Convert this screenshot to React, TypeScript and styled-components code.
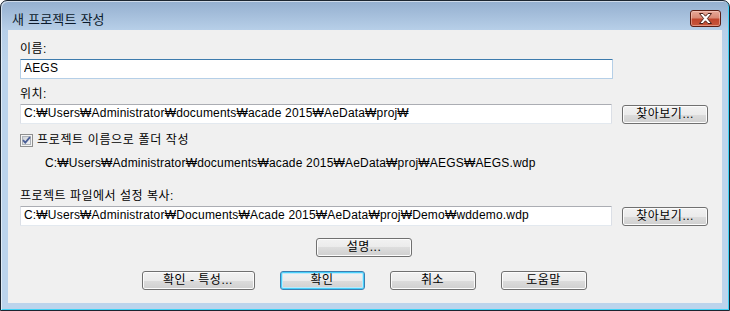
import React from 'react';
import styled, { createGlobalStyle, css } from 'styled-components';

const GlobalStyle = createGlobalStyle`
  html, body {
    margin: 0;
    padding: 0;
    background: #ffffff;
  }
  * {
    box-sizing: border-box;
  }
`;

const uiFont = `"Liberation Sans", "Noto Sans CJK KR", sans-serif`;

// Win7 basic theme frame
const Window = styled.div`
  width: 730px;
  height: 311px;
  border: 1px solid #1c2530;
  border-radius: 7px 7px 0 0;
  background: linear-gradient(to bottom, #94afcf 0, #b7cfe8 29px, #bcd4ec 60px, #bcd4ec 100%);
  box-shadow: inset 1px 1px 0 rgba(255, 255, 255, 0.55), inset -1px -1px 0 #3fd2f5;
  display: flex;
  flex-direction: column;
  font-family: ${uiFont};
  font-size: 12px;
  color: #000;
`;

const TitleBar = styled.div`
  height: 29px;
  display: flex;
  justify-content: space-between;
  align-items: flex-start;
  padding: 0 8px 0 11px;
`;

const Title = styled.div`
  font-size: 13px;
  line-height: 18px;
  margin-top: 10px;
  letter-spacing: 0.2px;
  color: #0b1a2c;
`;

const CloseButton = styled.div`
  width: 31px;
  height: 17px;
  margin-top: 9px;
  border: 1px solid #5b1e14;
  border-radius: 3px;
  background: linear-gradient(to bottom, #e7a899 0, #d98a76 45%, #c0452d 55%, #c8573c 100%);
  box-shadow: inset 0 0 0 1px rgba(255, 220, 210, 0.45);
  display: flex;
  align-items: center;
  justify-content: center;
`;

const Client = styled.div`
  flex: 1;
  margin: 0 7px 7px 7px;
  background: #f0f0f0;
  padding: 12px 14px 0 12px;
  display: flex;
  flex-direction: column;
`;

const Label = styled.div<{ $gap?: number }>`
  line-height: 14px;
  height: 14px;
  margin-top: ${(p) => p.$gap ?? 0}px;
  letter-spacing: 0.5px;
  white-space: nowrap;
`;

const Row = styled.div<{ $gap?: number }>`
  display: flex;
  align-items: center;
  gap: 10px;
  margin-top: ${(p) => p.$gap ?? 0}px;
`;

const TextBox = styled.input<{ $focused?: boolean }>`
  width: 593px;
  height: 20px;
  padding: 0 3px 3px 3px;
  margin: 0;
  font-family: ${uiFont};
  font-size: 12px;
  letter-spacing: 0.18px;
  color: #000;
  background: #fff;
  outline: none;
  border: 1px solid #dbdfe6;
  border-top-color: #abadb3;
  border-bottom-color: #e3e9ef;
  border-radius: 1px;
  ${(p) =>
    p.$focused &&
    css`
      border-color: #b5cfe7;
      border-top-color: #3d7bad;
    `}
`;

const Button = styled.button<{ $width: number; $default?: boolean }>`
  width: ${(p) => p.$width}px;
  height: 19px;
  padding: 0;
  margin: 0;
  font-family: ${uiFont};
  font-size: 12px;
  line-height: 17px;
  letter-spacing: 0.5px;
  color: #000;
  border: 1px solid #707070;
  border-radius: 3px;
  background: linear-gradient(to bottom, #f2f2f2 0, #ebebeb 50%, #dddddd 50%, #cfcfcf 100%);
  box-shadow: inset 0 0 0 1px #fcfcfc;
  white-space: nowrap;
  ${(p) =>
    p.$default &&
    css`
      border-color: #3c7fb1;
      box-shadow: inset 0 0 0 1px #48d0fa, inset 0 0 0 2px #bde9fb;
    `}
`;

const CheckRow = styled.label`
  display: flex;
  align-items: center;
  gap: 4px;
  height: 14px;
  margin-top: 9px;
  line-height: 14px;
  letter-spacing: 0.65px;
`;

const PathText = styled.div`
  margin-top: 9px;
  padding-left: 25px;
  line-height: 14px;
  height: 14px;
  letter-spacing: 0.18px;
  white-space: nowrap;
`;

const Centered = styled.div<{ $gap?: number; $spacing?: number }>`
  display: flex;
  justify-content: center;
  gap: ${(p) => p.$spacing ?? 0}px;
  margin-top: ${(p) => p.$gap ?? 0}px;
`;

const CloseGlyph = () => (
  <svg width="15" height="11" viewBox="0 0 15 11">
    <path
      d="M1.5 0.5 H5 L7.5 3.2 L10 0.5 H13.5 L9.4 5.5 L13.5 10.5 H10 L7.5 7.8 L5 10.5 H1.5 L5.6 5.5 Z"
      fill="#ffffff"
      stroke="#4a2018"
      strokeWidth="1"
      strokeLinejoin="round"
    />
  </svg>
);

const CheckBoxIcon = () => (
  <svg width="13" height="13" viewBox="0 0 13 13">
    <defs>
      <linearGradient id="cbFill" x1="0" y1="0" x2="1" y2="1">
        <stop offset="0" stopColor="#cbcfd5" />
        <stop offset="1" stopColor="#f6f6f6" />
      </linearGradient>
    </defs>
    <rect x="0.5" y="0.5" width="12" height="12" fill="#f4f4f4" stroke="#8e8f8f" />
    <rect x="2.5" y="2.5" width="8" height="8" fill="url(#cbFill)" stroke="#aeb3b9" />
    <path d="M3 6.2 L5.3 8.6 L10 3.2" fill="none" stroke="#4a5f97" strokeWidth="1.8" />
  </svg>
);

const PATH_LOC = 'C:₩Users₩Administrator₩documents₩acade 2015₩AeData₩proj₩';
const PATH_OUT = 'C:₩Users₩Administrator₩documents₩acade 2015₩AeData₩proj₩AEGS₩AEGS.wdp';
const PATH_TPL = 'C:₩Users₩Administrator₩Documents₩Acade 2015₩AeData₩proj₩Demo₩wddemo.wdp';

export default function App() {
  return (
    <>
      <GlobalStyle />
      <Window>
        <TitleBar>
          <Title>새 프로젝트 작성</Title>
          <CloseButton>
            <CloseGlyph />
          </CloseButton>
        </TitleBar>
        <Client>
          <Label>이름:</Label>
          <Row $gap={3}>
            <TextBox $focused readOnly value="AEGS" />
          </Row>

          <Label $gap={8}>위치:</Label>
          <Row $gap={3}>
            <TextBox readOnly value={PATH_LOC} />
            <Button $width={86}>찾아보기...</Button>
          </Row>

          <CheckRow>
            <CheckBoxIcon />
            <span>프로젝트 이름으로 폴더 작성</span>
          </CheckRow>
          <PathText>{PATH_OUT}</PathText>

          <Label $gap={19}>프로젝트 파일에서 설정 복사:</Label>
          <Row $gap={3}>
            <TextBox readOnly value={PATH_TPL} />
            <Button $width={86}>찾아보기...</Button>
          </Row>

          <Centered $gap={12}>
            <Button $width={96}>설명...</Button>
          </Centered>

          <Centered $gap={14} $spacing={25}>
            <Button $width={113}>확인 - 특성...</Button>
            <Button $width={85} $default>
              확인
            </Button>
            <Button $width={86}>취소</Button>
            <Button $width={86}>도움말</Button>
          </Centered>
        </Client>
      </Window>
    </>
  );
}
